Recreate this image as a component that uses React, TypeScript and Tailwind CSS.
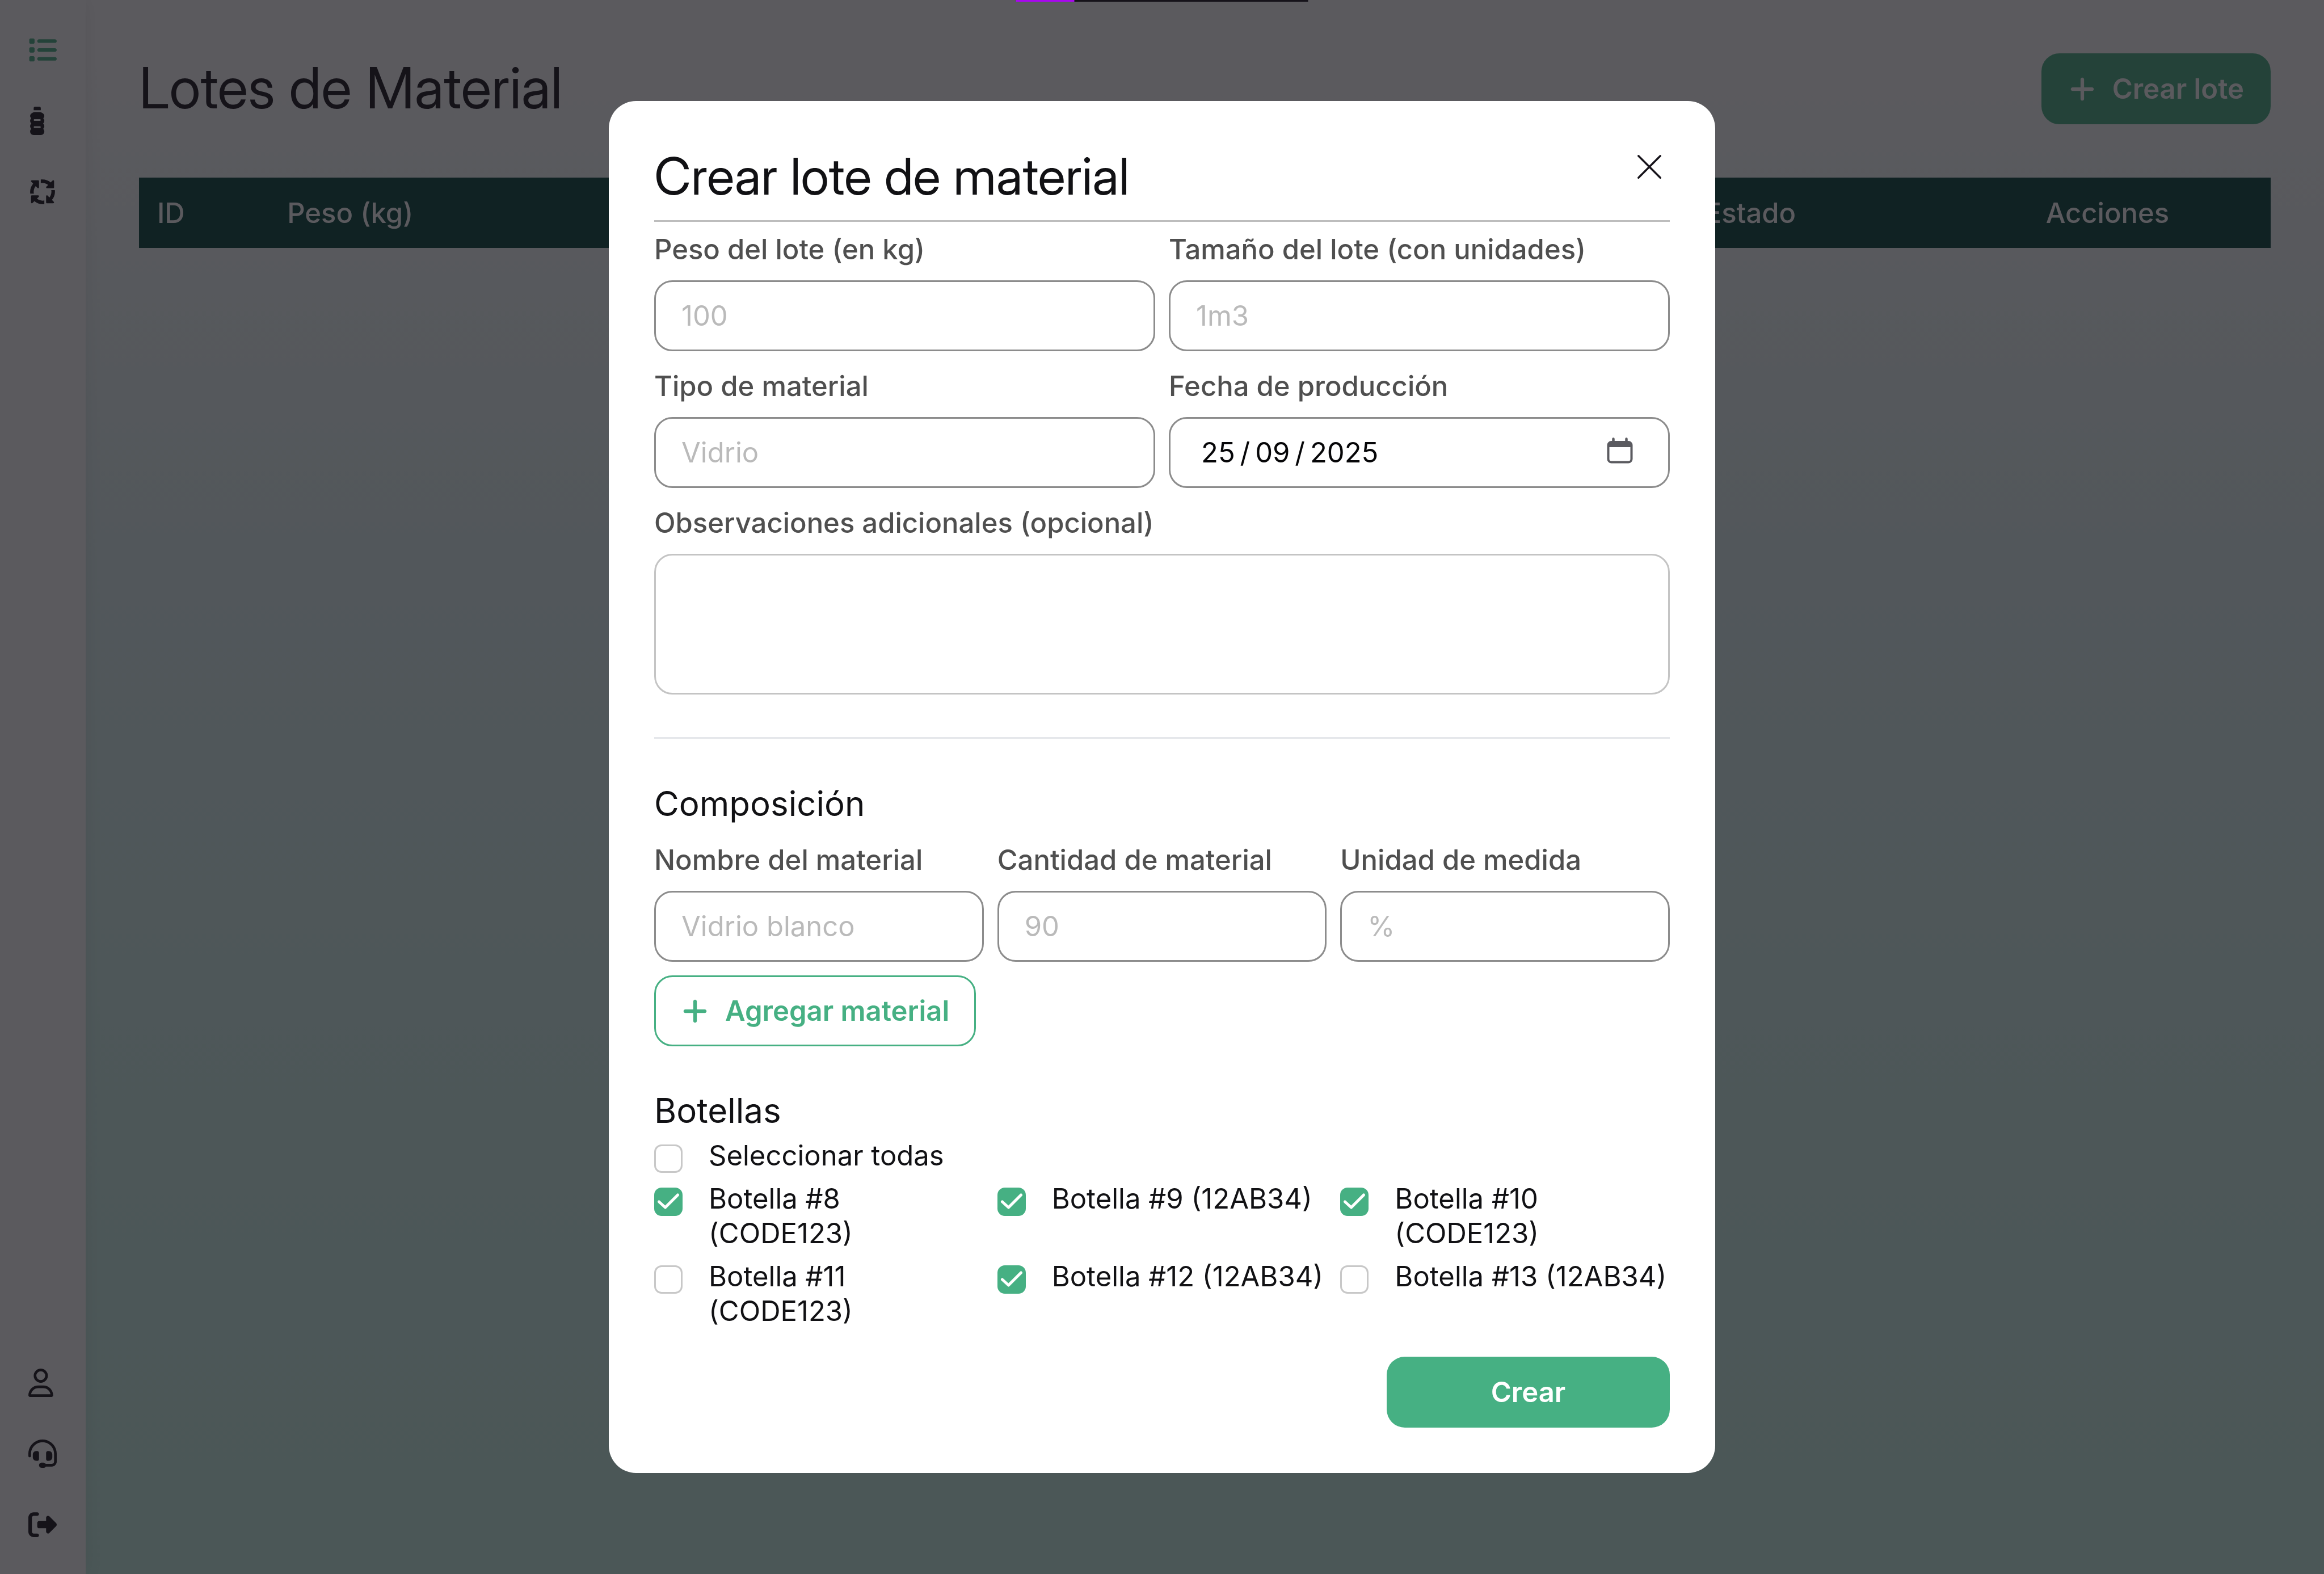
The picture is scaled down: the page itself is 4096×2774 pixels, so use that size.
import { useState } from "react";
import type { ReactNode } from "react";
import {
  FaArrowsSpin,
  FaBottleWater,
  FaHeadset,
  FaList,
  FaPlus,
  FaRegUser,
  FaRightFromBracket,
} from "react-icons/fa6";
import { BsXLg } from "react-icons/bs";

const mainLinks = [
  { label: "Lotes", href: "#lotes", Icon: FaList, active: true },
  { label: "Botellas", href: "#botellas", Icon: FaBottleWater, active: false },
  { label: "Reciclaje", href: "#reciclaje", Icon: FaArrowsSpin, active: false },
];

const accountLinks = [
  { label: "Perfil", href: "#perfil", Icon: FaRegUser, active: false },
  { label: "Soporte", href: "#soporte", Icon: FaHeadset, active: false },
  { label: "Salir", href: "#salir", Icon: FaRightFromBracket, active: false },
];

const bottles = [
  { id: 8, code: "CODE123" },
  { id: 9, code: "12AB34" },
  { id: 10, code: "CODE123" },
  { id: 11, code: "CODE123" },
  { id: 12, code: "12AB34" },
  { id: 13, code: "12AB34" },
];

const inputClass =
  "h-[125px] w-full rounded-[32px] border-3 border-[#8c8c8c] bg-white px-[45px] text-[#111114] outline-none placeholder:text-[#bababa]";

function NavLinks({ links }: { links: typeof mainLinks }) {
  return (
    <ul>
      {links.map(({ label, href, Icon, active }) => (
        <li key={label}>
          <a
            href={href}
            aria-label={label}
            className={
              active
                ? "flex h-[125px] items-center pl-[50px] text-[#46b083]"
                : "flex h-[125px] items-center pl-[50px] text-[#16131a]"
            }
          >
            <Icon className="size-[50px]" preserveAspectRatio="xMinYMid meet" />
          </a>
        </li>
      ))}
    </ul>
  );
}

function Field({ id, label, children }: { id: string; label: string; children: ReactNode }) {
  return (
    <div className="flex min-w-0 flex-col gap-6">
      <label htmlFor={id} className="font-medium text-[#4f4f4f]">
        {label}
      </label>
      {children}
    </div>
  );
}

function TextField({ id, label, placeholder }: { id: string; label: string; placeholder: string }) {
  return (
    <Field id={id} label={label}>
      <input id={id} type="text" placeholder={placeholder} className={inputClass} />
    </Field>
  );
}

function Tick({
  label,
  checked,
  onChange,
}: {
  label: string;
  checked: boolean;
  onChange: () => void;
}) {
  return (
    <label className="flex items-start gap-[46px] text-[#111114]">
      <span className="relative mt-[11px] size-[50px] shrink-0">
        <input
          type="checkbox"
          checked={checked}
          onChange={onChange}
          className="block size-full appearance-none rounded-[13px] border-3 border-[#c8c8c8] bg-white checked:border-[#46b083] checked:bg-[#46b083]"
        />
        {checked && (
          <svg
            viewBox="0 0 50 50"
            className="pointer-events-none absolute inset-0 size-full"
            fill="none"
            stroke="white"
            strokeWidth="5"
            strokeLinecap="round"
            strokeLinejoin="round"
          >
            <path d="M8.500 25 19.500 35 41.500 13" />
          </svg>
        )}
      </span>
      <span>{label}</span>
    </label>
  );
}

function CalendarIcon() {
  return (
    <svg viewBox="0 0 46 46" className="size-[46px]" fill="none">
      <rect x="2.5" y="8" width="41" height="35.5" rx="5.5" stroke="#5b5b60" strokeWidth="4" />
      <path d="M2.5 17V12a5 5 0 0 1 5-5h31a5 5 0 0 1 5 5v5z" fill="#5b5b60" />
      <path d="M11.500 2.500V8M34.500 2.500V8" stroke="#5b5b60" strokeWidth="4.500" strokeLinecap="round" />
    </svg>
  );
}

function CreateLotDialog() {
  const [selected, setSelected] = useState<number[]>([8, 9, 10, 12]);
  const all = selected.length === bottles.length;
  const toggle = (id: number) =>
    setSelected((s) => (s.includes(id) ? s.filter((x) => x !== id) : [...s, id]));

  return (
    <form
      role="dialog"
      aria-labelledby="dialog-title"
      onSubmit={(e) => e.preventDefault()}
      className="w-full max-w-[1950px] rounded-[48px] bg-white p-20"
    >
      <div className="flex items-start justify-between border-b-3 border-[#bdbdbd]">
        <h2
          id="dialog-title"
          className="pb-6 font-['Inter_Display','Inter',sans-serif] text-[90px] leading-[106px] text-[#111114]"
        >
          Crear lote de material
        </h2>
        <button type="button" aria-label="Cerrar" className="p-2 text-[#16131a]">
          <BsXLg className="size-14" />
        </button>
      </div>

      <div className="mt-[18px] grid grid-cols-2 gap-x-6 gap-y-[31px]">
        <TextField id="peso" label="Peso del lote (en kg)" placeholder="100" />
        <TextField id="tamano" label="Tamaño del lote (con unidades)" placeholder="1m3" />
        <TextField id="tipo" label="Tipo de material" placeholder="Vidrio" />
        <Field id="fecha" label="Fecha de producción">
          <div className="flex h-[125px] items-center rounded-[32px] border-3 border-[#8c8c8c] pr-[62px] pl-[54px]">
            <input
              id="fecha"
              type="text"
              inputMode="numeric"
              defaultValue={"25\u2009/\u200909\u2009/\u20092025"}
              className="min-w-0 flex-1 bg-transparent text-[#060608] outline-none"
            />
            <button type="button" aria-label="Abrir calendario" className="pb-2">
              <CalendarIcon />
            </button>
          </div>
        </Field>
        <div className="col-span-2">
          <Field id="observaciones" label="Observaciones adicionales (opcional)">
            <textarea
              id="observaciones"
              className="block h-[248px] w-full resize-none rounded-[32px] border-3 border-[#c4c4c4] px-[45px] py-8 outline-none"
            />
          </Field>
        </div>
      </div>

      <hr className="mt-[75px] mb-[76px] border-t-3 border-[#e5e7eb]" />

      <section>
        <h3 className="text-[60px] leading-[76px] text-[#111114]">Composición</h3>
        <div className="mt-[31px] grid grid-cols-3 gap-6">
          <TextField id="nombre" label="Nombre del material" placeholder="Vidrio blanco" />
          <TextField id="cantidad" label="Cantidad de material" placeholder="90" />
          <TextField id="unidad" label="Unidad de medida" placeholder="%" />
        </div>
        <button
          type="button"
          className="mt-6 flex h-[125px] items-center gap-7 rounded-[32px] border-3 border-[#46b083] px-11 font-semibold text-[#46b083]"
        >
          <FaPlus className="size-[50px]" />
          Agregar material
        </button>
      </section>

      <section className="mt-[75px]">
        <h3 className="text-[60px] leading-[76px] text-[#111114]">Botellas</h3>
        <div className="mt-[11px] grid grid-cols-3 gap-x-6 gap-y-[15px]">
          <div className="col-span-3">
            <Tick
              label="Seleccionar todas"
              checked={all}
              onChange={() => setSelected(all ? [] : bottles.map((b) => b.id))}
            />
          </div>
          {bottles.map((b) => (
            <Tick
              key={b.id}
              label={`Botella #${b.id} (${b.code})`}
              checked={selected.includes(b.id)}
              onChange={() => toggle(b.id)}
            />
          ))}
        </div>
      </section>

      <div className="mt-[50px] flex justify-end">
        <button
          type="submit"
          className="h-[125px] w-[499px] rounded-[32px] bg-[#46b083] font-semibold text-white"
        >
          Crear
        </button>
      </div>
    </form>
  );
}

export default function App() {
  return (
    <div className="flex min-h-screen bg-[linear-gradient(180deg,#ffffff_0%,#ffffff_4%,#e0f5f4_36%,#d2f5ed_65%,#c8f3e6_100%)] font-['Inter',sans-serif] text-[49px] leading-[61px]">
      <nav className="flex w-[151px] shrink-0 flex-col justify-between bg-white py-[25px] shadow-[0_0_30px_rgba(0,0,0,0.08)]">
        <NavLinks links={mainLinks} />
        <NavLinks links={accountLinks} />
      </nav>

      <main className="min-w-0 flex-1 p-[94px]">
        <div className="flex items-center justify-between">
          <h1 className="pb-1 font-['Inter_Display','Inter',sans-serif] text-[100px] leading-[120px] text-[#16131a]">
            Lotes de Material
          </h1>
          <button
            type="button"
            className="flex h-[125px] items-center gap-7 rounded-[32px] border-3 border-[#46b083] bg-[#46b083] px-11 font-semibold text-white"
          >
            <FaPlus className="size-[50px]" />
            Crear lote
          </button>
        </div>

        <table className="mt-[94px] w-full table-fixed text-left">
          <thead>
            <tr className="h-[124px] bg-[#04433b] text-white">
              <th className="w-[6.1%] px-8 font-medium">ID</th>
              <th className="px-8 font-medium">Peso (kg)</th>
              <th className="w-[16%] px-8 font-medium">Estado</th>
              <th className="w-[11.4%] px-8 font-medium">Acciones</th>
            </tr>
          </thead>
        </table>
      </main>

      <div className="fixed inset-0 flex items-center justify-center bg-[#15141a]/70">
        <CreateLotDialog />
      </div>

      <div className="fixed top-0 left-1/2 h-[3px] w-[515px] -translate-x-1/2 bg-[#16131a]">
        <div className="h-full w-1/5 bg-[#a906f0]" />
      </div>
    </div>
  );
}
